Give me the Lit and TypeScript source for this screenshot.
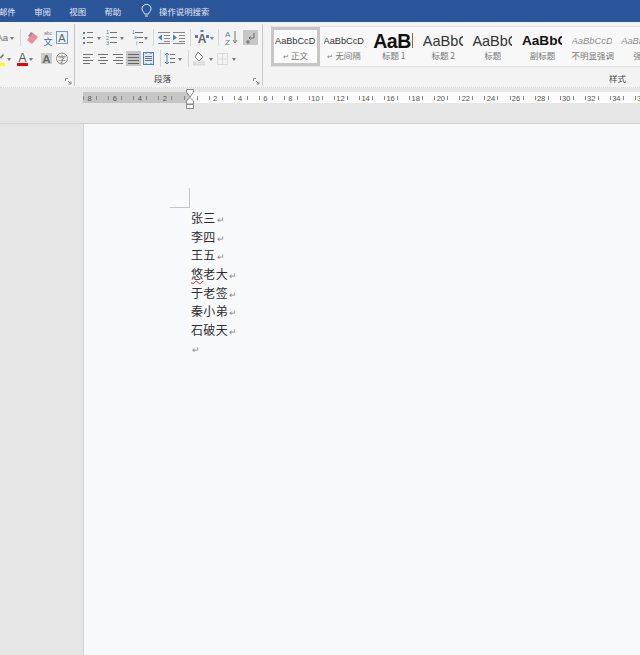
import { LitElement, html, css, svg } from "lit";
import { customElement } from "lit/decorators.js";

const blue = "#4a80bc";
const ink = "#707070";

// little helper for the "lines" icons
const lines = (rows: [number, number, number][], color = ink) =>
  rows.map(([x1, x2, y]) => svg`<line x1=${x1} x2=${x2} y1=${y + 0.5} y2=${y + 0.5} stroke=${color} />`);

const caret = svg`<path d="M1 0h4l-2 3z" fill="#777" transform="translate(0 9)" />`;

const icons: Record<string, [number, unknown]> = {
  caret: [7, caret],
  eraser: [16, svg`<path d="M9 5l5 4-6 7-5-4z" fill="#ee8a9a" /><path d="M4 8l3-4 2 1-3 4z" fill="#8a8a8a" />`],
  wen: [16, svg`<text x="8" y="7" font-size="5" text-anchor="middle" fill="#777" font-family="Liberation Sans">abc</text><text x="8" y="16.500" font-size="9" text-anchor="middle" fill="#2f6fb0" font-family="Noto Sans CJK SC">文</text>`],
  boxA: [12, svg`<rect x=".5" y="3.5" width="11" height="12" fill="#e8f0fa" stroke="#6f9ccc" /><text x="6" y="13.500" font-size="11" text-anchor="middle" fill="#666" font-family="Liberation Sans">A</text>`],
  hilite: [6, svg`<path d="M0 8l3-3 1 1-3 4z" fill="#777" /><rect x="0" y="14" width="5" height="3" fill="#ffff00" />`],
  redA: [11, svg`<text x="5.500" y="13" font-size="12" text-anchor="middle" fill="#555" font-family="Liberation Sans">A</text><rect x="0" y="14" width="11" height="3" fill="#f00000" />`],
  greyA: [11, svg`<rect width="11" height="11" y="4" fill="#cbcbcb" /><text x="5.500" y="14" font-size="11" font-weight="bold" text-anchor="middle" fill="#666" font-family="Liberation Sans">A</text>`],
  circle: [12, svg`<circle cx="6" cy="9.500" r="5.500" fill="none" stroke="#888" /><text x="6" y="12.500" font-size="8" text-anchor="middle" fill="#666" font-family="Noto Sans CJK SC">字</text>`],
  bullets: [10, svg`<g fill=${blue}><rect x="0" y="4" width="2" height="2" /><rect x="0" y="9" width="2" height="2" /><rect x="0" y="14" width="2" height="2" /></g>${lines([[4, 10, 4], [4, 10, 9], [4, 10, 14]])}`],
  numbers: [11, svg`<text font-size="5.500" fill=${blue} font-family="Liberation Sans"><tspan x="0" y="6">1</tspan><tspan x="0" y="11.500">2</tspan><tspan x="0" y="17">3</tspan></text>${lines([[4, 11, 4], [4, 11, 9], [4, 11, 14]])}`],
  multi: [11, svg`<text font-size="5" fill=${blue} font-family="Liberation Sans"><tspan x="0" y="6">1</tspan><tspan x="2" y="11">a</tspan><tspan x="4" y="16.500">i</tspan></text>${lines([[3, 11, 4], [5, 11, 9], [7, 11, 14]])}`],
  outdent: [12, svg`${lines([[0, 12, 4], [6, 12, 7], [6, 12, 10], [6, 12, 13], [0, 12, 15]], "#888")}<path d="M0 9.500l4-3v6z" fill=${blue} />`],
  indent: [12, svg`${lines([[0, 12, 4], [6, 12, 7], [6, 12, 10], [6, 12, 13], [0, 12, 15]], "#888")}<path d="M4 9.500l-4-3v6z" fill=${blue} />`],
  star: [14, svg`<text x="7" y="15" font-size="12" font-weight="bold" text-anchor="middle" fill="#666" font-family="Liberation Sans">A</text><g fill=${blue}><rect x="0" y="7" width="3" height="3" /><rect x="11" y="7" width="3" height="3" /><rect x="5.500" y="2" width="3" height="2" /></g>`],
  sort: [13, svg`<text font-size="8" font-family="Liberation Sans"><tspan x="0" y="9" fill=${blue}>A</tspan><tspan x="0" y="17" fill="#777">Z</tspan></text><path d="M10 3v12M8 12l2 3 2-3" fill="none" stroke="#777" />`],
  pilcrow: [15, svg`<rect width="15" height="15" y="2" fill="#c6c6c6" /><path d="M11 5v5H6M7.500 8.500L6 10l1.500 1.500M5 12v4M3 14h4" fill="none" stroke="#666" />`],
  left: [10, lines([[0, 10, 5], [0, 7, 8], [0, 10, 11], [0, 7, 14]])],
  center: [10, lines([[0, 10, 5], [2, 8, 8], [0, 10, 11], [2, 8, 14]])],
  right: [10, lines([[0, 10, 5], [3, 10, 8], [0, 10, 11], [3, 10, 14]])],
  justify: [15, svg`<rect width="15" height="15" y="2" fill="#c6c6c6" />${lines([[2, 13, 5], [2, 13, 8], [2, 13, 11], [2, 13, 14]], "#666")}`],
  dist: [11, svg`<rect x=".5" y="3.500" width="10" height="12" fill="#dfe8f3" stroke=${blue} /><path d="M3 3v2M8 3v2M3 14v2M8 14v2" stroke=${blue} />${lines([[2, 9, 7], [2, 9, 9], [2, 9, 11]])}`],
  spacing: [10, svg`<path d="M2 4v11M0 6l2-2 2 2M0 13l2 2 2-2" fill="none" stroke=${blue} />${lines([[5, 10, 5], [5, 10, 9], [5, 10, 13]])}`],
  shade: [12, svg`<path d="M5 3l5 5-4 4-4-4z" fill="#fff" stroke="#888" /><rect x="0" y="13" width="12" height="3" fill="#e6e6e6" stroke="#bbb" stroke-width=".5" />`],
  borders: [11, svg`<path d="M.5 4.500h10v11H.5zM.5 10h10M5.500 4.500v11" fill="none" stroke="#c4c4c4" stroke-dasharray="1 1" />`],
};

const gapW = (n: number) => html`<span class="sp" style="width:${n}px"></span>`;
const ico = (name: string) => {
  const [w, body] = icons[name];
  return html`<svg width=${w} height="20" viewBox="0 0 ${w} 20">${body}</svg>`;
};
const sep = html`<span class="sep"></span>`;
const launcher = html`<svg class="launch" width="7" height="7" viewBox="0 0 7 7"><path d="M.5 3V.5H3M3 3l3 3M3.500 6H6V3.500" fill="none" stroke="#888" /></svg>`;

const styleItems = [
  { sample: "AaBbCcDd", label: "正文", mark: true, cls: "s-normal", on: true },
  { sample: "AaBbCcDd", label: "无间隔", mark: true, cls: "s-normal" },
  { sample: "AaBl", label: "标题 1", cls: "s-h1" },
  { sample: "AaBbC", label: "标题 2", cls: "s-h2" },
  { sample: "AaBbC", label: "标题", cls: "s-h2" },
  { sample: "AaBbC", label: "副标题", cls: "s-h3" },
  { sample: "AaBbCcD", label: "不明显强调", cls: "s-em" },
  { sample: "AaBbCcDd", label: "强调", cls: "s-em" },
];

const people = [
  ["张三"],
  ["李四"],
  ["王五"],
  ["悠", "老大"],
  ["于老签"],
  ["秦小弟"],
  ["石破天"],
  [],
];

const ZERO = 107; // ruler zero, measured from the ruler's left edge
const UNIT = 12.54;

function rulerMarks() {
  const out = [];
  for (let n = -8; n <= 36; n += 2) {
    const x = ZERO + n * UNIT;
    if (n !== 0) {
      out.push(svg`<text x=${x} y="8.500" text-anchor="middle" font-size="7.500" fill="#555" font-family="Liberation Sans">${Math.abs(n)}</text>`);
    }
    // snap to whole pixels so the ticks stay crisp and even
    const a = Math.round(x - 6.5) + 0.5;
    const b = Math.round(x + 6.5) + 0.5;
    out.push(svg`<line x1=${a} x2=${a} y1="4" y2="8" stroke="#888" />`);
    out.push(svg`<line x1=${b} x2=${b} y1="4" y2="8" stroke="#888" />`);
  }
  return out;
}

@customElement("app-root")
export class AppRoot extends LitElement {
  static styles = css`
    :host {
      display: block;
      width: 640px;
      height: 655px;
      overflow: hidden;
      background: #e6e6e6;
      font-family: "Liberation Sans", "Noto Sans CJK SC", sans-serif;
    }
    svg {
      display: block;
      flex: none;
    }
    .tabs {
      height: 22px;
      background: #2b579a;
      color: #e3e9f3;
      font: 8.4px "Noto Sans CJK SC", sans-serif;
      display: flex;
      align-items: center;
      margin-left: -1px;
    }
    .tabs span {
      margin-right: 18.4px;
    }
    .tabs .bulb {
      margin: 0 7px 0 1.5px;
    }
    .ribbon {
      height: 65px;
      background: #f3f3f3;
      border-bottom: 1px dotted #d8d8d8;
      display: flex;
      overflow: hidden;
    }
    .group {
      flex: none;
      position: relative;
      height: 62px;
      box-sizing: border-box;
      border-right: 1px solid #c8c8c8;
      margin-top: 2px;
    }
    .g1 {
      width: 75px;
    }
    .g2 {
      width: 188px;
      padding-left: 8px;
    }
    .g3 {
      flex: 1;
      border: none;
      padding-left: 7px;
    }
    .row {
      display: flex;
      align-items: center;
      height: 21px;
    }
    .r1 {
      margin-top: 3px;
    }
    .sp {
      flex: none;
      display: block;
    }
    .sep {
      flex: none;
      width: 1px;
      height: 17px;
      background: #d6d6d6;
    }
    .aa {
      flex: none;
      width: 8px;
      font-size: 9.5px;
      color: #666;
      direction: rtl;
      white-space: nowrap;
      overflow: hidden;
    }
    .grp-label {
      position: absolute;
      left: 0;
      right: 12px;
      top: 48px;
      text-align: center;
      font: 8.5px "Noto Sans CJK SC", sans-serif;
      color: #444;
    }
    .launch {
      position: absolute;
      right: 2px;
      bottom: 1px;
    }
    .gallery {
      display: flex;
      width: 400px;
      height: 41px;
      margin-top: 2px;
      background: #f8f8f8;
      border-top: 1px solid #e3e3e3;
      border-bottom: 1px solid #e3e3e3;
      box-sizing: border-box;
    }
    .st {
      flex: none;
      width: 49.6px;
      box-sizing: border-box;
      padding: 3px 0 0 4px;
      overflow: hidden;
    }
    .st.on {
      width: 48.6px;
      margin-left: 1px;
      border: 3px solid #c6c6c6;
      padding: 0 0 0 1px;
      background: #fbfbfb;
    }
    .sample {
      width: 40px;
      height: 19px;
      line-height: 22px;
      overflow: hidden;
      white-space: nowrap;
      color: #333;
    }
    .s-normal {
      font-size: 9.2px;
    }
    .s-h1 {
      font-size: 19.5px;
      font-weight: bold;
      letter-spacing: -0.4px;
      color: #111;
    }
    .s-h2 {
      font-size: 14.5px;
    }
    .s-h3 {
      font-size: 13.6px;
      font-weight: bold;
      color: #111;
    }
    .s-em {
      font-size: 9.4px;
      font-style: italic;
      color: #8c8c8c;
    }
    .st-label {
      width: 41px;
      text-align: center;
      font: 8.5px/12px "Noto Sans CJK SC", sans-serif;
      color: #777;
      white-space: nowrap;
    }
    .st-label i {
      font-style: normal;
      font-size: 7px;
      margin-right: 2px;
    }
    .styles-label {
      position: absolute;
      top: 48px;
      left: 346px;
      font: 8.5px "Noto Sans CJK SC", sans-serif;
      color: #444;
    }
    .ruler-band {
      height: 36px;
      position: relative;
      padding: 4px 0 0 83px;
      box-sizing: border-box;
      border-bottom: 1px solid #d2d2d2;
    }
    .marker {
      position: absolute;
      left: 185px;
      top: 1px;
    }
    .page {
      margin-left: 83px;
      height: 531px;
      background: #f8f9fb;
      border-left: 1px solid #d2d2d2;
      box-sizing: border-box;
      padding: 64px 0 0 86px;
      position: relative;
    }
    .crop {
      position: absolute;
      left: 86px;
      top: 64px;
      width: 20px;
      height: 20px;
      box-sizing: border-box;
      border-right: 1px solid #c4c4c4;
      border-bottom: 1px solid #c4c4c4;
    }
    .body {
      padding: 21px 0 0 21px;
      font: 12px/18.65px "Noto Sans CJK SC", sans-serif;
      letter-spacing: 0.35px;
      color: #2c2c2c;
    }
    .line {
      height: 18.65px;
      white-space: nowrap;
    }
    .typo {
      text-decoration: underline wavy #e02020 1px;
      text-underline-offset: 1px;
    }
    .pm {
      font-size: 9px;
      color: #8a8a8a;
      margin-left: 1px;
    }
  `;

  render() {
    return html`
      <div class="tabs">
        <span>邮件</span>
        <span>审阅</span>
        <span>视图</span>
        <span>帮助</span>
        <svg class="bulb" width="11" height="14" viewBox="0 0 11 14"><path d="M3.500 10C3 8 1 7 1 4.800a4.500 4.500 0 0 1 9 0C10 7 8 8 7.500 10zM4 12h3" fill="none" stroke="#e3e9f3" /></svg>
        <span>操作说明搜索</span>
      </div>

      <div class="ribbon">
        <div class="group g1">
          <div class="row r1">
            <span class="aa">Aa</span>${gapW(1)}${ico("caret")}${gapW(4)}${sep}${gapW(3)}${ico("eraser")}${ico("wen")}${ico("boxA")}
          </div>
          <div class="row">
            ${ico("hilite")}${ico("caret")}${gapW(4)}${ico("redA")}${ico("caret")}${gapW(6)}${ico("greyA")}${gapW(4)}${ico("circle")}
          </div>
          ${launcher}
        </div>

        <div class="group g2">
          <div class="row r1">
            ${ico("bullets")}${gapW(3)}${ico("caret")}${gapW(3)}${ico("numbers")}${gapW(2)}${ico("caret")}${gapW(6)}${ico("multi")}${ico("caret")}${gapW(3)}${sep}${gapW(4)}${ico("outdent")}${gapW(3)}${ico("indent")}${gapW(5)}${sep}${gapW(4)}${ico("star")}${ico("caret")}${gapW(2)}${sep}${gapW(6)}${ico("sort")}${gapW(5)}${ico("pilcrow")}
          </div>
          <div class="row">
            ${ico("left")}${gapW(5)}${ico("center")}${gapW(5)}${ico("right")}${gapW(3)}${ico("justify")}${gapW(2)}${ico("dist")}${gapW(6)}${sep}${gapW(4)}${ico("spacing")}${gapW(2)}${ico("caret")}${gapW(4)}${sep}${gapW(4)}${ico("shade")}${gapW(3)}${ico("caret")}${gapW(2)}${ico("borders")}${gapW(3)}${ico("caret")}
          </div>
          <div class="grp-label">段落</div>
          ${launcher}
        </div>

        <div class="group g3">
          <div class="gallery">
            ${styleItems.map(
              (s) => html`
                <div class="st ${s.on ? "on" : ""}">
                  <div class="sample ${s.cls}">${s.sample}</div>
                  <div class="st-label">${s.mark ? html`<i>↵</i>` : ""}${s.label}</div>
                </div>
              `
            )}
          </div>
          <div class="styles-label">样式</div>
        </div>
      </div>

      <div class="ruler-band">
        <svg width="557" height="11" viewBox="0 0 557 11">
          <rect width="107" height="11" fill="#c6c6c6" />
          <rect x="107" width="450" height="11" fill="#fbfbfb" />
          ${rulerMarks()}
        </svg>
        <svg class="marker" width="11" height="21" viewBox="0 0 11 21">
          <path d="M1.500.5h7V3L5 8 1.500 3zM5 8.500L8.500 12v3h-7v-3zM1.500 15.500h7v4h-7z" fill="#fafafa" stroke="#8a8a8a" />
        </svg>
      </div>

      <div class="page">
        <div class="crop"></div>
        <div class="body">
          ${people.map(
            (p) => html`
              <div class="line">
                ${p.length === 2 ? html`<span class="typo">${p[0]}</span>${p[1]}` : p[0]}<span class="pm">↵</span>
              </div>
            `
          )}
        </div>
      </div>
    `;
  }
}
